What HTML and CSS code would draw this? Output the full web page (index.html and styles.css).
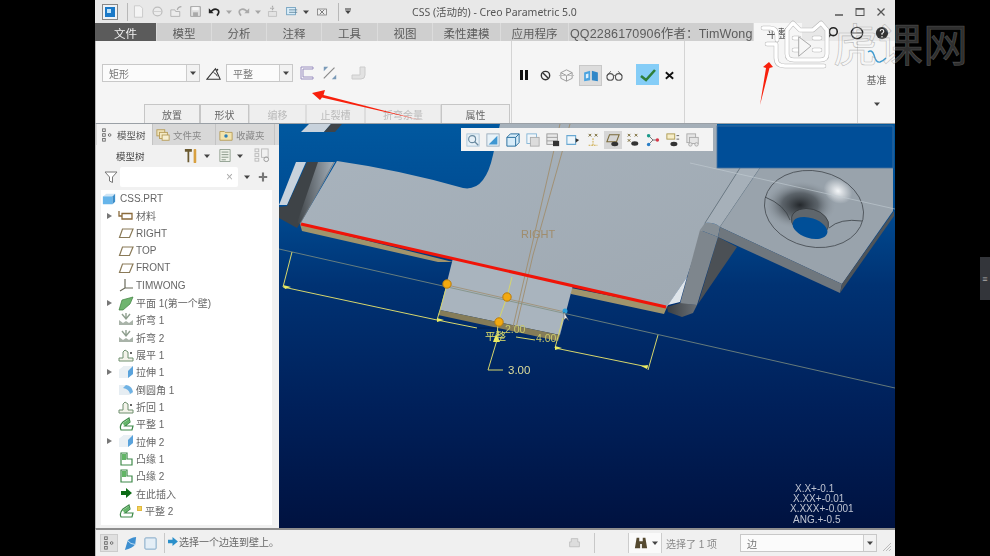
FILE: index.html
```html
<!DOCTYPE html>
<html lang="zh">
<head>
<meta charset="utf-8">
<title>CSS (活动的) - Creo Parametric 5.0</title>
<link rel="stylesheet" href="styles.css">
</head>
<body>
<svg class="defs" width="0" height="0" aria-hidden="true">
  <symbol id="i-plane" viewBox="0 0 16 16"><path d="M4.5 4H15L11.5 12.5H1.5Z" fill="none" stroke="#8a7a58" stroke-width="1.2"/></symbol>
  <symbol id="i-csys" viewBox="0 0 16 16"><path d="M7 2V11L2 14M7 11H15" fill="none" stroke="#6a6a5a" stroke-width="1.2"/></symbol>
  <symbol id="i-mat" viewBox="0 0 16 16"><path d="M1 3V8H4M4 5.500H14V11H4Z" fill="none" stroke="#8a6a3a" stroke-width="1.3"/></symbol>
  <symbol id="i-wall" viewBox="0 0 16 16"><path d="M4 5L15 2L12 9L5 15L1 15Z" fill="#6fb56f" stroke="#3d7f3d" stroke-width=".7"/></symbol>
  <symbol id="i-bend" viewBox="0 0 16 16"><path d="M1 8L5 11L8 9L11 11L15 8V13H1Z" fill="#a9b3a9"/><path d="M4 2L8 7L12 2M8 1V7" stroke="#8f9f8f" stroke-width="1.4" fill="none"/></symbol>
  <symbol id="i-unbend" viewBox="0 0 16 16"><path d="M1 14H15V11H10V5L7 3L5 5V11H1Z" fill="#f3f3ea" stroke="#6f8f6f"/><circle cx="13" cy="6" r="1" fill="#333"/></symbol>
  <symbol id="i-ext" viewBox="0 0 16 16"><path d="M1 6L6 2H15V10L10 14H1Z" fill="#d8e6f0"/><path d="M6 2H15L10 7V14H1V6Z" fill="#eaf0f4"/><path d="M10 7L15 2V10L10 14Z" fill="#5aa3dc"/></symbol>
  <symbol id="i-round" viewBox="0 0 16 16"><path d="M1 4H9Q15 5 15 12L11 14H1Z" fill="#e6edf2"/><path d="M8 4Q14 5 15 11L12 13Q11 8 5 7Z" fill="#6fb2e4"/></symbol>
  <symbol id="i-flat" viewBox="0 0 16 16"><path d="M3 14Q1 10 5 6L11 2L12 6L7 10L15 10L14 14Z" fill="#fff" stroke="#3f8a4a" stroke-width="1.2"/><path d="M5 7L11 3L11.500 6L6 10Z" fill="#62b566"/></symbol>
  <symbol id="i-flange" viewBox="0 0 16 16"><path d="M3 2H9V8H14V14H3Z" fill="#fff" stroke="#3f8a4a" stroke-width="1.2"/><path d="M4 3H8V9H4Z" fill="#62b566"/></symbol>
  <symbol id="i-cube" viewBox="0 0 16 16"><path d="M1 5L5 2H15L12 5Z" fill="#cfe5f5"/><path d="M1 5H12V14H1Z" fill="#67b5ea"/><path d="M12 5L15 2V11L12 14Z" fill="#3d8ec9"/></symbol>
  <symbol id="i-down" viewBox="0 0 8 8"><path d="M1 2.500H7L4 6Z" fill="#444"/></symbol>
  <symbol id="i-tree" viewBox="0 0 16 16"><g fill="none" stroke="#666" stroke-width="1"><rect x="3" y="1" width="3" height="3"/><rect x="3" y="6.500" width="3" height="3"/><rect x="3" y="12" width="3" height="3"/><circle cx="11" cy="8" r="1.500"/></g></symbol>
  <symbol id="i-box" viewBox="0 0 16 16"><rect x="2" y="2" width="12" height="12" rx="1" fill="#e4eef6" stroke="#7aa3c4"/></symbol>
</svg>

<div class="stage">
  <div class="side"></div>
  <div class="app">
    <header class="titlebar">
      <div class="qa">
        <svg class="qa-logo" viewBox="0 0 16 16"><rect x=".5" y=".5" width="15" height="15" fill="#eef2f6" stroke="#888"/><rect x="3" y="3" width="10" height="10" fill="#1a79c8"/><rect x="5" y="5" width="4" height="4" fill="#bfe3fa"/></svg>
        <span class="qa-sep"></span>
        <svg class="qa-i" viewBox="0 0 16 16"><path d="M3 1H10L13 4V15H3Z" fill="#f4f4f4" stroke="#c4c4c4"/></svg>
        <svg class="qa-i" viewBox="0 0 16 16"><circle cx="8" cy="8" r="5.500" fill="#ececec" stroke="#bdbdbd" stroke-width="1.500"/><path d="M3 8H13" stroke="#c9c9c9"/></svg>
        <svg class="qa-i" viewBox="0 0 16 16"><path d="M1 14V6H6L7 8H12V14Z" fill="#ececec" stroke="#aaa"/><path d="M9 6Q10 2 14 2" stroke="#aaa" fill="none" stroke-width="1.500"/></svg>
        <svg class="qa-i" viewBox="0 0 16 16"><path d="M2 2H14V14H2Z" fill="#dedede" stroke="#999"/><rect x="4" y="2.500" width="8" height="4" fill="#f5f5f5"/><rect x="5" y="9" width="6" height="5" fill="#aaa"/></svg>
        <svg class="qa-i" viewBox="0 0 16 16"><path d="M3 9Q7 3 12 6Q15 9 11 13" fill="none" stroke="#222" stroke-width="2"/><path d="M1 4L7 10L1 10Z" fill="#222"/></svg>
        <svg class="qa-c" viewBox="0 0 8 8"><use href="#i-down" class="faint"/></svg>
        <svg class="qa-i" viewBox="0 0 16 16"><path d="M13 9Q9 3 4 6Q1 9 5 13" fill="none" stroke="#aaa" stroke-width="2"/><path d="M15 4L9 10L15 10Z" fill="#aaa"/></svg>
        <svg class="qa-c" viewBox="0 0 8 8"><use href="#i-down" class="faint"/></svg>
        <svg class="qa-i" viewBox="0 0 16 16"><path d="M3 8H13V14H3Z" fill="#e3e3e3" stroke="#bbb"/><path d="M8 1V8M5 4H11" stroke="#aaa" stroke-width="1.500" stroke-dasharray="2 1"/></svg>
        <svg class="qa-i" viewBox="0 0 16 16"><rect x="2" y="3" width="11" height="9" fill="#d8ecf8" stroke="#6a9cbc"/><path d="M5 6H15M5 9H15" stroke="#5a7f96"/></svg>
        <svg class="qa-c" viewBox="0 0 8 8"><use href="#i-down"/></svg>
        <svg class="qa-x" viewBox="0 0 16 16"><rect x="2" y="4" width="12" height="8" fill="#eee" stroke="#777"/><path d="M5 5L11 11M11 5L5 11" stroke="#555"/></svg>
        <span class="qa-sep"></span>
        <svg class="qa-c qa-last" viewBox="0 0 8 8"><path d="M1 1H7" stroke="#333"/><use href="#i-down"/></svg>
      </div>
      <div class="doc-title">CSS (活动的) - Creo Parametric 5.0</div>
      <div class="win">
        <svg viewBox="0 0 12 12"><path d="M2 9H10" stroke="#555" stroke-width="1.500"/></svg>
        <svg viewBox="0 0 12 12"><rect x="2" y="2.500" width="8" height="7" fill="none" stroke="#555"/><path d="M2 3H10" stroke="#555" stroke-width="1.500"/></svg>
        <svg viewBox="0 0 12 12"><path d="M2.500 2.500L9.500 9.500M9.500 2.500L2.500 9.500" stroke="#555" stroke-width="1.300"/></svg>
      </div>
    </header>

    <nav class="tabs">
      <span class="tab tab-file">文件</span>
      <span class="tab">模型</span>
      <span class="tab">分析</span>
      <span class="tab">注释</span>
      <span class="tab">工具</span>
      <span class="tab">视图</span>
      <span class="tab">柔性建模</span>
      <span class="tab">应用程序</span>
      <span class="tab tab-qq">QQ2286170906作者：TimWong</span>
      <span class="tab tab-on">平整</span>
      <div class="tab-tools">
        <svg viewBox="0 0 16 16"><circle cx="9.500" cy="6.500" r="4.500" fill="none" stroke="#222" stroke-width="1.800"/><path d="M6 10L2 15" stroke="#222" stroke-width="2"/></svg>
        <svg class="tt-wide" viewBox="0 0 16 16"><circle cx="8" cy="8" r="6.500" fill="#eee" stroke="#222" stroke-width="1.500"/><path d="M2 8H14" stroke="#222"/></svg>
        <svg viewBox="0 0 16 16"><circle cx="8" cy="8" r="7" fill="#333"/><path d="M6 6Q6 4 8 4Q10 4 10 6Q10 7.500 8 8.500V10M8 11.500V13" stroke="#eee" fill="none" stroke-width="1.400"/></svg>
      </div>
    </nav>

    <section class="ribbon">
      <div class="rb-feature">
        <div class="rb-row">
          <div class="combo combo-type"><span>矩形</span><i class="combo-btn"><svg viewBox="0 0 8 8"><use href="#i-down"/></svg></i></div>
          <svg class="rb-tri" viewBox="0 0 18 18"><path d="M1 15L10 4L15 15Z" fill="none" stroke="#333" stroke-width="1.100"/><path d="M8 8Q11 9 12 12" stroke="#333" fill="none"/><circle cx="12" cy="5" r="1" fill="#333"/></svg>
          <div class="combo combo-shape"><span>平整</span><i class="combo-btn"><svg viewBox="0 0 8 8"><use href="#i-down"/></svg></i></div>
          <svg class="rb-i rb-a" viewBox="0 0 16 16"><path d="M2 2H14V4H4V12H14V14H2Z" fill="#f6f6f6" stroke="#9a8fc0"/></svg>
          <svg class="rb-i" viewBox="0 0 18 18"><path d="M2 15L14 3" stroke="#888" stroke-width="1.300"/><path d="M2 2L7 2L2 7ZM16 16L11 16L16 11Z" fill="#7a9ab8"/></svg>
          <svg class="rb-i rb-c" viewBox="0 0 16 16"><path d="M1 14V10H9V2H14V10Q14 14 10 14Z" fill="#e2e2e2" stroke="#ccc"/></svg>
        </div>
        <div class="rb-tabs">
          <span class="rb-tab">放置</span>
          <span class="rb-tab">形状</span>
          <span class="rb-tab rb-off">编移</span>
          <span class="rb-tab rb-off">止裂槽</span>
          <span class="rb-tab rb-off">折弯余量</span>
          <span class="rb-tab">属性</span>
        </div>
      </div>
      <div class="rb-actions">
        <svg class="ra ra-pause" viewBox="0 0 14 14"><path d="M3 2H6V12H3ZM8 2H11V12H8Z" fill="#111"/></svg>
        <svg class="ra ra-stop" viewBox="0 0 14 14"><circle cx="7" cy="7" r="4.500" fill="none" stroke="#333" stroke-width="1.500"/><path d="M4 4L10 10" stroke="#333" stroke-width="1.500"/></svg>
        <svg class="ra ra-ghost" viewBox="0 0 18 18"><path d="M3 6L9 3L15 6V12L9 15L3 12ZM3 6L9 9L15 6M9 9V15" fill="none" stroke="#999"/><path d="M1 9H17" stroke="#bbb"/></svg>
        <span class="ra-on"><svg viewBox="0 0 18 14"><path d="M1 3L8 1V12L1 13Z" fill="#4aa3e0"/><path d="M10 1L17 3V13L10 12Z" fill="#2f87c8"/><path d="M3 5L6 4V9L3 10Z" fill="#dff0fb"/></svg></span>
        <svg class="ra ra-glass" viewBox="0 0 18 12"><circle cx="4.500" cy="7" r="3.500" fill="none" stroke="#555" stroke-width="1.200"/><circle cx="13.500" cy="7" r="3.500" fill="none" stroke="#555" stroke-width="1.200"/><path d="M8 6Q9 5 10 6M1 6L5 1M17 6L13 1" stroke="#555" fill="none"/></svg>
        <span class="ok"><svg viewBox="0 0 16 14"><path d="M1 8L6 12L15 2" fill="none" stroke="#2f7f3a" stroke-width="2.600"/></svg></span>
        <svg class="ra ra-x" viewBox="0 0 12 12"><path d="M2 2.500L10 9.500M10 2.500L2 9.500" stroke="#111" stroke-width="2"/></svg>
      </div>
      <div class="rb-empty"></div>
      <div class="rb-datum">
        <svg class="datum-ico" viewBox="0 0 20 14"><path d="M1 2Q5 -1 7 5Q9 13 13 12Q16 11 19 8" fill="none" stroke="#3f9bd0" stroke-width="1.400"/></svg>
        <span>基准</span>
        <svg class="datum-c" viewBox="0 0 8 8"><use href="#i-down"/></svg>
      </div>
    </section>

    <div class="main">
      <aside class="tree-pane">
        <div class="pane-tabs">
          <span class="pt pt-on"><svg viewBox="0 0 16 16"><use href="#i-tree"/></svg>模型树</span>
          <span class="pt"><svg viewBox="0 0 16 16"><rect x="1" y="2" width="9" height="7" fill="#efe3b8" stroke="#b59a55"/><rect x="4" y="5" width="9" height="7" fill="#f4e9c4" stroke="#b59a55"/><rect x="7" y="8" width="8" height="6" fill="#f7efd2" stroke="#b59a55"/></svg>文件夹</span>
          <span class="pt"><svg viewBox="0 0 16 16"><path d="M1 4H6L7 5H15V14H1Z" fill="#f2e3ad" stroke="#b59a55"/><circle cx="8" cy="9" r="2" fill="#2a7fb8"/></svg>收藏夹</span>
        </div>
        <div class="pane-tool">
          <b>模型树</b>
          <svg class="pt-hammer" viewBox="0 0 16 18"><path d="M1 1H9V4H6V16H4V4H1Z" fill="#6b5a30"/><rect x="11" y="1" width="3" height="16" rx="1" fill="#d8a040"/></svg>
          <svg class="pt-c" viewBox="0 0 8 8"><use href="#i-down"/></svg>
          <svg class="pt-doc" viewBox="0 0 14 16"><path d="M1 1H13V15H1Z" fill="#eef2ea" stroke="#8a9a8a"/><path d="M3 4H11M3 7H11M3 10H11M3 13H8" stroke="#7a8a7a"/></svg>
          <svg class="pt-c" viewBox="0 0 8 8"><use href="#i-down"/></svg>
          <svg class="pt-grid" viewBox="0 0 18 16"><g fill="none" stroke="#bbb"><rect x="1" y="1" width="4" height="3"/><rect x="1" y="6" width="4" height="3"/><rect x="1" y="11" width="4" height="3"/><rect x="8" y="1" width="7" height="9"/></g><circle cx="13" cy="12" r="2.500" fill="none" stroke="#999"/></svg>
        </div>
        <div class="pane-filter">
          <svg class="f-ico" viewBox="0 0 14 14"><path d="M1 2H13L8.500 7V12.500L5.500 11V7Z" fill="#fff" stroke="#777"/></svg>
          <div class="f-input"><span>×</span></div>
          <svg class="pt-c" viewBox="0 0 8 8"><use href="#i-down"/></svg>
          <span class="f-plus">✚</span>
        </div>
        <ul class="tree">
          <li class="row row-root"><svg class="ti" viewBox="0 0 16 16"><use href="#i-cube"/></svg>CSS.PRT</li>
          <li class="row"><i class="exp"></i><svg class="ti" viewBox="0 0 16 16"><use href="#i-mat"/></svg>材料</li>
          <li class="row"><i class="noexp"></i><svg class="ti" viewBox="0 0 16 16"><use href="#i-plane"/></svg>RIGHT</li>
          <li class="row"><i class="noexp"></i><svg class="ti" viewBox="0 0 16 16"><use href="#i-plane"/></svg>TOP</li>
          <li class="row"><i class="noexp"></i><svg class="ti" viewBox="0 0 16 16"><use href="#i-plane"/></svg>FRONT</li>
          <li class="row"><i class="noexp"></i><svg class="ti" viewBox="0 0 16 16"><use href="#i-csys"/></svg>TIMWONG</li>
          <li class="row"><i class="exp"></i><svg class="ti" viewBox="0 0 16 16"><use href="#i-wall"/></svg>平面 1(第一个壁)</li>
          <li class="row"><i class="noexp"></i><svg class="ti" viewBox="0 0 16 16"><use href="#i-bend"/></svg>折弯 1</li>
          <li class="row"><i class="noexp"></i><svg class="ti" viewBox="0 0 16 16"><use href="#i-bend"/></svg>折弯 2</li>
          <li class="row"><i class="noexp"></i><svg class="ti" viewBox="0 0 16 16"><use href="#i-unbend"/></svg>展平 1</li>
          <li class="row"><i class="exp"></i><svg class="ti" viewBox="0 0 16 16"><use href="#i-ext"/></svg>拉伸 1</li>
          <li class="row"><i class="noexp"></i><svg class="ti" viewBox="0 0 16 16"><use href="#i-round"/></svg>倒圆角 1</li>
          <li class="row"><i class="noexp"></i><svg class="ti" viewBox="0 0 16 16"><use href="#i-unbend"/></svg>折回 1</li>
          <li class="row"><i class="noexp"></i><svg class="ti" viewBox="0 0 16 16"><use href="#i-flat"/></svg>平整 1</li>
          <li class="row"><i class="exp"></i><svg class="ti" viewBox="0 0 16 16"><use href="#i-ext"/></svg>拉伸 2</li>
          <li class="row"><i class="noexp"></i><svg class="ti" viewBox="0 0 16 16"><use href="#i-flange"/></svg>凸缘 1</li>
          <li class="row"><i class="noexp"></i><svg class="ti" viewBox="0 0 16 16"><use href="#i-flange"/></svg>凸缘 2</li>
          <li class="row"><i class="noexp"></i><svg class="ti" viewBox="0 0 16 16"><path d="M8 3L14 8L8 13V10H3V6H8Z" fill="#0d6b16"/></svg>在此插入</li>
          <li class="row"><i class="noexp"></i><svg class="ti" viewBox="0 0 16 16"><use href="#i-flat"/></svg><i class="new-dot"></i>平整 2</li>
        </ul>
      </aside>

      <div class="viewport">
        <svg class="scene" viewBox="279 124 616 404" preserveAspectRatio="none">
          <defs>
            <linearGradient id="bg" x1="0" y1="0" x2="0" y2="1"><stop offset="0" stop-color="#00589f"/><stop offset=".2" stop-color="#004c93"/><stop offset=".4" stop-color="#003273"/><stop offset=".7" stop-color="#00205a"/><stop offset="1" stop-color="#001240"/></linearGradient>
            <linearGradient id="plate" x1="0" y1="0" x2="1" y2="1"><stop offset="0" stop-color="#a9b4be"/><stop offset="1" stop-color="#9ea8b1"/></linearGradient>
            <linearGradient id="shade" x1="0" y1="0" x2="1" y2="0"><stop offset="0" stop-color="#3e4347"/><stop offset="1" stop-color="#a9b4be"/></linearGradient>
            <linearGradient id="under" x1="0" y1="0" x2="1" y2="0"><stop offset="0" stop-color="#3a3e42"/><stop offset="1" stop-color="#6a7076"/></linearGradient>
            <radialGradient id="dark" cx=".5" cy=".5" r=".5"><stop offset="0" stop-color="#24282c"/><stop offset=".5" stop-color="#4d545a" stop-opacity=".8"/><stop offset="1" stop-color="#8d969e" stop-opacity="0"/></radialGradient>
            <radialGradient id="spec" cx=".5" cy=".5" r=".5"><stop offset="0" stop-color="#f4f6f8"/><stop offset="1" stop-color="#f4f6f8" stop-opacity="0"/></radialGradient>
            <clipPath id="csk"><ellipse cx="814" cy="209" rx="50" ry="38" transform="rotate(12 814 209)"/></clipPath>
          </defs>
          <rect x="279" y="124" width="616" height="404" fill="url(#bg)"/>

          <!-- upper-left folded edge -->
          <path d="M309 124L301 132H324L331 124Z" fill="#c8d2dc"/>
          <path d="M331 124L324 132H335L342 124Z" fill="#3f4448"/>
          <path d="M279 205L296 162H306L287 205Z" fill="#c8d2dc"/>
          <path d="M279 207L287 206L307 162H333L301 222L297 228L279 218Z" fill="#3e4347"/>
          <path d="M318 162H335L301 223H297Z" fill="url(#shade)"/>

          <!-- main plate -->
          <path d="M300 224L337 161Q400 170 463 188Q485 192 493 155L500 124H717V168H740L705 223L687 277L667 307Z" fill="url(#plate)"/>
          <path d="M334 162L300 224" stroke="#70787f" stroke-width=".8"/>
          <path d="M300 224L302 231L438 262L453 262ZM667 307L664 314L571 294L571 288Z" fill="#a0946c"/>
          <!-- tab -->
          <path d="M453 258L573 285L560 335L440 310Z" fill="#a9b4be"/>
          <path d="M440 310L560 335L558 341L438 315Z" fill="#857c58"/>

          <!-- right bend + flange -->
          <path d="M718 237L737 247L698 304Z" fill="#4b5055"/>
          <path d="M700 230L718 237L697 305L680 304Z" fill="#7e868d"/>
          <path d="M667 307L680 303L697 305L693 313L682 317L668 312Z" fill="url(#under)"/>
          <path d="M668 305L687 277L680 302Z" fill="#dfe5ea"/>
          <path d="M700 230L705 223Q714 222 720 227L718 237Z" fill="#858e95"/>
          <path d="M740 168H760L720 227Q714 222 705 223Z" fill="#a6b0b9"/>
          <path d="M740 168L705 223M760 168L720 227" stroke="#6b7379" stroke-width=".8"/>
          <path d="M760 168H893V211L842 284L720 227Z" fill="#99a3ac"/>
          <path d="M720 227L842 284L840 293L718 237Z" fill="#6f777e"/>
          <path d="M842 284L894 211V216L840 293Z" fill="#4e5459"/>

          <!-- countersunk hole -->
          <g>
            <ellipse cx="814" cy="209" rx="50" ry="38" transform="rotate(12 814 209)" fill="#98a2ab"/>
            <g clip-path="url(#csk)">
              <ellipse cx="800" cy="205" rx="36" ry="24" fill="url(#dark)"/>
              <ellipse cx="838" cy="191" rx="15" ry="12" transform="rotate(30 838 191)" fill="url(#spec)"/>
            </g>
            <ellipse cx="814" cy="209" rx="50" ry="38" transform="rotate(12 814 209)" fill="none" stroke="#474d52" stroke-width=".8"/>
            <ellipse cx="810" cy="222" rx="19" ry="13" transform="rotate(15 810 222)" fill="#5f666c" stroke="#2e3236" stroke-width=".6"/>
            <ellipse cx="810" cy="228" rx="18" ry="10" transform="rotate(18 810 228)" fill="#004f98"/>
            <path d="M765 197Q785 205 790 220M829 228Q840 218 862 221" fill="none" stroke="#3a4045" stroke-width=".8"/>
          </g>

          <rect x="717" y="126" width="176" height="42" fill="#004e98" stroke="#44709e" stroke-width=".8"/>

          <!-- datum + construction lines -->
          <path d="M560 124L513 327M570 124L533 255L516 328" stroke="#a08d6d" stroke-width=".9" fill="none"/>
          <path d="M279 249L895 388" stroke="#7f8f80" stroke-width=".8"/>
          <path d="M690 163L895 209" stroke="#c3ccd4" stroke-width=".6"/>
          <path d="M447 285L565 312" stroke="#a08d6d" stroke-width=".8"/>
          <text class="datum" x="521" y="238">RIGHT</text>

          <!-- highlighted edge -->
          <path d="M301 224L666 307" stroke="#f01408" stroke-width="3"/>

          <!-- dimensions -->
          <g fill="none" stroke="#d6d66c" stroke-width="1">
            <path d="M292 252L283 287L437 320L477 328M437 320L440 310L447 285"/>
            <path d="M563 318L555 348L648 367M658 335L648 370"/>
            <path d="M512 277L507 297L498 322L497 340L488 370H503"/>
            <path d="M516 337L535 340"/>
          </g>
          <path d="M477 328H497" stroke="#002050" stroke-width="1"/>
          <path d="M283 285L291 287L285 289ZM437 318L444 320L437 322ZM555 346L562 348L555 350ZM648 365L641 366L647 369ZM496 334L500 342H493Z" fill="#ecec60"/>
          <circle cx="447" cy="284" r="4.200" fill="#f3a90f" stroke="#b87d10"/>
          <circle cx="507" cy="297" r="4.200" fill="#f3a90f" stroke="#b87d10"/>
          <circle cx="499" cy="322" r="4.200" fill="#f3a90f" stroke="#b87d10"/>
          <circle cx="565" cy="311" r="2.500" fill="#2d9fd8"/>
          <path d="M564 312L564 320L566 318L569 321Z" fill="#e8e8e8" stroke="#333" stroke-width=".4"/>
          <text class="dim" x="505" y="333">2.00</text>
          <text class="dim" x="536" y="342">4.00</text>
          <text class="dim dim-cn" x="485" y="340">平整</text>
          <text class="dim dim-main" x="508" y="374">3.00</text>

          <g class="tol">
            <text x="795" y="492">X.X+-0.1</text>
            <text x="793" y="502">X.XX+-0.01</text>
            <text x="790" y="512">X.XXX+-0.001</text>
            <text x="793" y="523">ANG.+-0.5</text>
          </g>
        </svg>

        <div class="view-tools">
          <svg viewBox="0 0 16 16"><rect x="1" y="1" width="14" height="14" fill="#e6f0f7" stroke="#a9c4d8"/><circle cx="7" cy="7" r="4" fill="none" stroke="#6a8aa0" stroke-width="1.300"/><path d="M10 10L14 14" stroke="#6a8aa0" stroke-width="1.500"/></svg>
          <svg viewBox="0 0 16 16"><rect x="1" y="1" width="14" height="14" fill="#e8f2f8" stroke="#9ab"/><path d="M3 13L13 3V13Z" fill="#3f97d2"/></svg>
          <svg viewBox="0 0 16 16"><path d="M1 5L5 1H15V11L11 15H1Z" fill="#d7ecf9" stroke="#2a6f9e" stroke-width="1.100"/><path d="M1 5H11V15M11 5L15 1" fill="none" stroke="#2a6f9e" stroke-width="1.100"/></svg>
          <svg viewBox="0 0 16 16"><rect x="1" y="1" width="11" height="11" fill="#f1f6fa" stroke="#7fb2d4"/><rect x="5" y="5" width="10" height="10" fill="#dcdcdc" stroke="#aaa"/></svg>
          <svg viewBox="0 0 16 16"><rect x="1" y="1" width="12" height="12" fill="#e8e8e8" stroke="#999"/><path d="M1 5H13M1 9H13" stroke="#999"/><rect x="8" y="9" width="7" height="6" fill="#333"/></svg>
          <svg viewBox="0 0 16 16"><path d="M1 3H11V13H1Z" fill="#eef6fb" stroke="#68a8d2" stroke-width="1.200"/><path d="M11 6L15 8L11 11Z" fill="#333"/></svg>
          <svg viewBox="0 0 16 16"><g stroke="#6b5a20"><path d="M3 1L6 4M6 1L3 4M10 1L13 4M13 1L10 4"/><path d="M8 6V14M3 14H13" stroke="#c8a030" stroke-dasharray="2 1"/></g></svg>
          <span class="vt-on"><svg viewBox="0 0 16 16"><path d="M4 2H15L12 10H1Z" fill="none" stroke="#7a6a3a" stroke-width="1.200"/><ellipse cx="10" cy="12.500" rx="4" ry="2.500" fill="#333"/></svg></span>
          <svg viewBox="0 0 16 16"><g stroke="#6b5a20"><path d="M2 1L5 4M5 1L2 4M10 1L13 4M13 1L10 4M2 7L5 10M5 7L2 10"/></g><ellipse cx="10" cy="12" rx="4" ry="2.500" fill="#333"/></svg>
          <svg viewBox="0 0 16 16"><path d="M2 2L8 8L2 14M8 8H14" stroke="#666" fill="none"/><circle cx="3" cy="3" r="2" fill="#1a9a8a"/><circle cx="3" cy="13" r="2" fill="#2a7fc8"/><circle cx="13" cy="8" r="2" fill="#d8384a"/></svg>
          <svg viewBox="0 0 16 16"><rect x="1" y="1" width="9" height="6" fill="#f6edc8" stroke="#a8964a"/><path d="M12 3H15M12 7H15" stroke="#555"/><ellipse cx="9" cy="12.500" rx="4" ry="2.500" fill="#333"/></svg>
          <svg viewBox="0 0 16 16"><g fill="#e5e5e5" stroke="#a8a8a8"><rect x="1" y="1" width="10" height="10"/><rect x="4" y="5" width="10" height="7"/><circle cx="5" cy="13" r="2"/><circle cx="12" cy="13" r="2"/></g></svg>
        </div>
      </div>
    </div>

    <footer class="status">
      <span class="st-on"><svg viewBox="0 0 16 16"><use href="#i-tree"/></svg></span>
      <svg class="st-i" viewBox="0 0 16 16"><path d="M2 15L5 5Q7 2 14 1L13 9Q10 13 2 15Z" fill="#3d8fd0"/><path d="M5 5Q8 9 13 9" stroke="#cfe5f5" fill="none"/></svg>
      <svg class="st-i" viewBox="0 0 16 16"><use href="#i-box"/></svg>
      <span class="st-sep"></span>
      <div class="st-msg"><svg viewBox="0 0 12 10"><path d="M6 0L12 5L6 10V7H1V3H6Z" fill="#2a8fca"/></svg><span>选择一个边连到壁上。</span></div>
      <svg class="st-print" viewBox="0 0 16 16"><path d="M4 2H12V6H14V12H2V6H4Z" fill="#ddd" stroke="#bbb"/></svg>
      <span class="st-sep st-sep2"></span>
      <span class="st-find"><svg viewBox="0 0 16 16"><path d="M3 2H6V6H10V2H13L15 14H9V9H7V14H1Z" fill="#554a30"/></svg><svg class="st-caret" viewBox="0 0 8 8"><use href="#i-down"/></svg></span>
      <span class="st-count">选择了 1 项</span>
      <div class="combo combo-filter"><span>边</span><i class="combo-btn"><svg viewBox="0 0 8 8"><use href="#i-down"/></svg></i></div>
      <svg class="st-grip" viewBox="0 0 10 10"><path d="M9 1L1 9M9 4L4 9M9 7L7 9" stroke="#bbb"/></svg>
    </footer>
  </div>
  <div class="side side-right"><span class="edge-tab">≡</span></div>

  <svg class="overlay" viewBox="0 0 990 556" aria-hidden="true">
    <g fill="#f8200c">
      <path d="M312 93L325 90L323.500 95L420 120L322 97.500L320 100Z"/>
      <path d="M769 62L773 67L769.500 68L760 105L766 68L763 67Z"/>
    </g>
    <g class="wm-logo">
      <g class="wm-under">
        <path d="M763 28H770Q777 28 777 36V40M767 44H776V58Q776 66 785 66H824"/>
        <path d="M787 30L793 23L800 30H813L821 23L827 30V54Q827 60 820 60H794Q787 60 787 54Z"/>
        <path d="M794 38H799M814 38H820M794 50H799M814 50H820"/>
      </g>
      <g class="wm-top">
        <path d="M763 28H770Q777 28 777 36V40M767 44H776V58Q776 66 785 66H824"/>
        <path d="M787 30L793 23L800 30H813L821 23L827 30V54Q827 60 820 60H794Q787 60 787 54Z"/>
        <path d="M794 38H799M814 38H820M794 50H799M814 50H820"/>
      </g>
      <path class="wm-play" d="M799 37L811 46L799 56Z"/>
    </g>
    <text class="wm-text" x="833" y="62">虎课网</text>
  </svg>
</div>
</body>
</html>
```

FILE: styles.css
```css
* { box-sizing: border-box; }
html, body { margin: 0; padding: 0; height: 100%; background: #000; overflow: hidden; }
body { font-family: "Liberation Sans", "Noto Sans CJK SC", sans-serif; font-size: 10px; color: #555; }
.defs { position: absolute; }
.faint { opacity: .4; }
svg { display: block; flex: none; }
i { font-style: normal; }

.stage { position: relative; display: flex; width: 990px; height: 556px; background: #000; }
.side { width: 95px; flex: none; }
.side-right { display: flex; justify-content: flex-end; padding-top: 257px; }
.edge-tab { width: 10px; height: 43px; background: #33353a; color: #aaa; font-size: 9px; display: flex; align-items: center; justify-content: center; }

.app { width: 800px; flex: none; height: 556px; display: flex; flex-direction: column; background: #f2f2f2; filter: blur(.35px); }

/* title bar */
.titlebar { height: 23px; flex: none; display: flex; align-items: center; background: #e8e8e8; }
.qa { width: 317px; flex: none; display: flex; align-items: center; padding-left: 7px; }
.qa-logo { width: 16px; height: 16px; }
.qa-sep { width: 1px; height: 18px; background: #b8b8b8; margin: 0 1px 0 9px; }
.qa-i { width: 13px; height: 13px; margin: 0 3px; }
.qa-c { width: 8px; height: 8px; margin: 0 1px; }
.qa-x { width: 12px; height: 12px; margin: 0 1px 0 5px; }
.qa-last { margin-left: 4px; }
.doc-title { font-family: "Noto Sans", "Noto Sans CJK SC", sans-serif; font-size: 10.500px; color: #555; white-space: nowrap; }
.win { margin-left: auto; display: flex; gap: 9px; padding-right: 8px; }
.win svg { width: 12px; height: 12px; }

/* ribbon tabs */
.tabs { height: 18px; flex: none; display: grid; grid-template-columns: 62px 55px 55px 55px 56px 55px 68px 68px 185px 48px 1fr; background: #e8e8e8; font-size: 11.500px; }
.tab { display: flex; align-items: center; justify-content: center; background: #cfcfcf; color: #5c5c5c; border-right: 1px solid #dcdcdc; white-space: nowrap; }
.tab-file { background: #5b5b5b; color: #f0f0f0; }
.tab-qq { font-size: 12.500px; letter-spacing: .15px; justify-content: flex-start; padding-left: 1px; }
.tab-on { background: #f6f6f6; border: 0; }
.tab-tools { display: flex; align-items: center; justify-content: flex-end; gap: 11px; padding-right: 6px; }
.tab-tools svg { width: 14px; height: 14px; }

/* ribbon */
.ribbon { height: 83px; flex: none; display: flex; background: #f5f5f5; border-left: 1px solid #bdbdbd; border-bottom: 1px solid #9aa0a6; }
.rb-feature { width: 416px; flex: none; display: flex; flex-direction: column; justify-content: space-between; border-right: 1px solid #d4d4d4; }
.rb-row { display: flex; align-items: center; padding: 23px 0 0 6px; }
.combo { height: 18px; display: flex; align-items: center; justify-content: space-between; background: #fbfbfb; border: 1px solid #c8c8c8; padding-left: 6px; color: #777; }
.combo-btn { width: 13px; height: 100%; display: flex; align-items: center; justify-content: center; border-left: 1px solid #ccc; background: #f2f2f2; }
.combo-btn svg { width: 8px; height: 8px; }
.combo-type { width: 98px; }
.combo-shape { width: 67px; }
.rb-tri { width: 17px; height: 17px; margin: 0 3px 0 6px; }
.rb-i { width: 16px; height: 16px; margin-right: 7px; }
.rb-a { margin-left: 6px; }
.rb-c { margin-left: 6px; }
.rb-tabs { display: grid; grid-template-columns: 56px 49px 57px 59px 76px 69px; margin-left: 48px; height: 19px; font-size: 10px; }
.rb-tab { display: flex; align-items: center; justify-content: center; background: #f0f0f0; border: 1px solid #c6c6c6; border-bottom: 0; color: #666; }
.rb-off { background: #eee; color: #bbb; border-color: #ddd; }

.rb-actions { width: 172px; flex: none; display: flex; align-self: flex-start; padding: 22px 0 0 5px; height: 100%; align-items: flex-start; }
.ra { flex: none; }
.ra-pause { width: 14px; height: 14px; margin-top: 5px; }
.ra-stop { width: 13px; height: 13px; margin: 6px 0 0 8px; }
.ra-ghost { width: 17px; height: 17px; margin: 4px 0 0 6px; }
.ra-on { width: 23px; height: 21px; margin: 2px 0 0 4px; background: #dcdcdc; border: 1px solid #c8c8c8; display: flex; align-items: center; justify-content: center; }
.ra-on svg { width: 16px; height: 12px; }
.ra-glass { width: 17px; height: 12px; margin: 7px 0 0 4px; }
.ok { width: 23px; height: 21px; margin: 1px 0 0 13px; background: #85cdf7; display: flex; align-items: center; justify-content: center; }
.ok svg { width: 16px; height: 14px; }
.ra-x { width: 11px; height: 11px; margin: 7px 0 0 5px; }
.rb-empty { width: 174px; flex: none; border-left: 1px solid #d4d4d4; border-right: 1px solid #d4d4d4; }
.rb-datum { flex: 1; display: flex; flex-direction: column; align-items: center; font-size: 10px; padding-top: 9px; color: #666; }
.datum-ico { width: 20px; height: 14px; margin-bottom: 8px; }
.datum-c { width: 8px; height: 8px; margin-top: 13px; }

/* main */
.main { height: 404px; flex: none; display: flex; }
.tree-pane { width: 184px; flex: none; display: flex; flex-direction: column; background: #f1f1f1; border-left: 1px solid #bdbdbd; }
.pane-tabs { height: 21px; flex: none; display: grid; grid-template-columns: 56px 63px 59px; font-size: 9.500px; background: #dadada; padding-left: 1px; }
.pt { display: flex; align-items: center; gap: 3px; padding-left: 3px; background: #d8d8d8; color: #888; border-right: 1px solid #c4c4c4; white-space: nowrap; overflow: hidden; }
.pt svg { width: 14px; height: 14px; }
.pt-on { background: #f1f1f1; color: #555; }
.pane-tool { height: 21px; flex: none; display: flex; align-items: center; padding-left: 20px; font-size: 9.500px; }
.pane-tool b { font-weight: 400; width: 68px; color: #444; }
.pt-hammer { width: 14px; height: 16px; }
.pt-c { width: 8px; height: 8px; margin: 0 5px; }
.pt-doc { width: 12px; height: 15px; margin-left: 3px; }
.pt-grid { width: 17px; height: 15px; margin-left: 5px; }
.pane-filter { height: 21px; flex: none; display: flex; align-items: center; padding-left: 8px; }
.f-ico { width: 14px; height: 14px; margin-right: 2px; }
.f-input { width: 118px; height: 20px; background: #fff; border-radius: 2px; display: flex; align-items: center; justify-content: flex-end; padding-right: 5px; color: #aaa; font-size: 12px; }
.f-plus { color: #777; font-size: 10px; margin-left: 2px; }
.tree { list-style: none; margin: 3px 0 3px 5px; padding: 0; width: 171px; flex: 1; background: #fff; }
.row { height: 17.340px; display: flex; align-items: center; gap: 2px; white-space: nowrap; color: #666; }
.row-root { gap: 4px; padding-left: 1px; }
.row-root .ti { width: 14px; height: 14px; }
.exp { width: 0; height: 0; margin: 0 4px 0 6px; border-left: 5px solid #777; border-top: 3.500px solid transparent; border-bottom: 3.500px solid transparent; }
.noexp { width: 15px; }
.ti { width: 16px; height: 16px; }
.new-dot { width: 5px; height: 5px; background: #f2d25a; border: 1px solid #e0b840; margin: 0 1px 4px 1px; }

/* viewport */
.viewport { position: relative; flex: 1; min-width: 0; }
.scene { display: block; width: 100%; height: 100%; }
.datum { font-size: 11px; fill: #a08d6d; }
.dim { font-size: 10.500px; fill: #c9c96a; }
.dim-cn { font-family: "Noto Sans CJK SC", sans-serif; fill: #e2e26a; }
.dim-main { font-size: 11.500px; fill: #dcdc9a; }
.tol text { font-size: 10px; fill: #bfc5d2; }
.view-tools { position: absolute; left: 182px; top: 4px; width: 252px; height: 23px; background: #f3f3f3; display: flex; align-items: center; padding-left: 5px; gap: 6px; }
.view-tools svg { width: 14px; height: 14px; }
.vt-on { width: 18px; height: 18px; margin: 0 -2px; background: #d6d6d6; display: flex; align-items: center; justify-content: center; }

/* status */
.status { height: 28px; flex: none; display: flex; align-items: center; background: #f0f0f0; border-top: 2px solid #8e8e8e; border-left: 1px solid #bdbdbd; padding: 0 0 0 4px; }
.st-on { width: 18px; height: 18px; background: #e0e0e0; border: 1px solid #ccc; display: flex; align-items: center; justify-content: center; }
.st-on svg { width: 14px; height: 14px; }
.st-i { width: 15px; height: 15px; margin-left: 5px; }
.st-sep { width: 1px; height: 20px; background: #c8c8c8; margin-left: 6px; }
.st-msg { display: flex; align-items: center; gap: 1px; width: 390px; margin-left: 2px; font-size: 10px; color: #666; padding-bottom: 3px; }
.st-msg svg { width: 11px; height: 9px; }
.st-print { width: 13px; height: 13px; margin-left: 11px; }
.st-sep2 { margin-left: 13px; margin-right: 33px; }
.st-find { width: 34px; height: 20px; display: flex; align-items: center; gap: 3px; padding-left: 5px; background: #fafafa; border-left: 1px solid #ccc; border-right: 1px solid #ccc; }
.st-find svg { width: 14px; height: 14px; }
.st-find .st-caret { width: 8px; height: 8px; }
.st-count { width: 78px; padding-left: 4px; color: #888; font-size: 10px; }
.combo-filter { width: 137px; }
.st-grip { width: 10px; height: 10px; margin: 8px 0 0 5px; }

/* overlay: video annotations + watermark */
.overlay { position: absolute; left: 0; top: 0; width: 990px; height: 556px; pointer-events: none; }
.wm-logo path { fill: none; stroke-linecap: round; stroke-linejoin: round; }
.wm-under path { stroke: #b5b5b5; stroke-width: 4.500; }
.wm-top path { stroke: #fff; stroke-width: 3.500; }
.wm-logo .wm-play { fill: #f6f6f6; stroke: #aaa; stroke-width: 1; }
.wm-text { font-family: "Noto Sans CJK SC", sans-serif; font-weight: 400; font-size: 45px; fill: rgba(255,255,255,.2); stroke: rgba(130,130,130,.45); stroke-width: .7; }
```
